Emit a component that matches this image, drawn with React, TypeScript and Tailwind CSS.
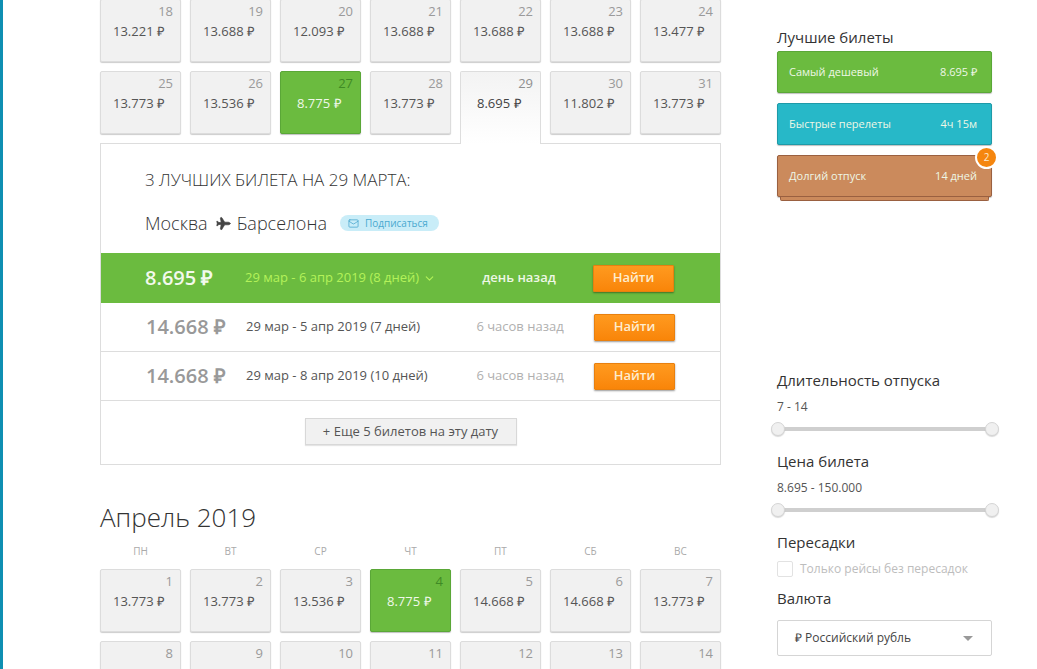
import { ChevronDown, Mail, Plane } from 'lucide-react'

type Day = { day: number; price?: string; kind?: 'cheap' | 'active' }

const marchRows: Day[][] = [
  [
    { day: 18, price: '13.221' },
    { day: 19, price: '13.688' },
    { day: 20, price: '12.093' },
    { day: 21, price: '13.688' },
    { day: 22, price: '13.688' },
    { day: 23, price: '13.688' },
    { day: 24, price: '13.477' },
  ],
  [
    { day: 25, price: '13.773' },
    { day: 26, price: '13.536' },
    { day: 27, price: '8.775', kind: 'cheap' },
    { day: 28, price: '13.773' },
    { day: 29, price: '8.695', kind: 'active' },
    { day: 30, price: '11.802' },
    { day: 31, price: '13.773' },
  ],
]

const aprilRows: Day[][] = [
  [
    { day: 1, price: '13.773' },
    { day: 2, price: '13.773' },
    { day: 3, price: '13.536' },
    { day: 4, price: '8.775', kind: 'cheap' },
    { day: 5, price: '14.668' },
    { day: 6, price: '14.668' },
    { day: 7, price: '13.773' },
  ],
  [{ day: 8 }, { day: 9 }, { day: 10 }, { day: 11 }, { day: 12 }, { day: 13 }, { day: 14 }],
]

const weekdays = ['ПН', 'ВТ', 'СР', 'ЧТ', 'ПТ', 'СБ', 'ВС']

function DayCell({ cell }: { cell: Day }) {
  if (cell.kind === 'active') {
    return (
      <div className="relative z-10 h-[73px] w-[81px] rounded-t-[2px] border border-b-0 border-[#dddddd] bg-gradient-to-b from-[#f3f3f3] to-white pr-[7px] pt-[2px]">
        <div className="text-right text-[13px] leading-[18px] text-[#8f8f8f]">{cell.day}</div>
        <div className="mt-[2px] pl-[16px] text-[13px] leading-[18px] text-[#444444]">{cell.price} ₽</div>
      </div>
    )
  }
  const cheap = cell.kind === 'cheap'
  return (
    <div
      className={
        cheap
          ? 'h-[63px] w-[81px] rounded-[2px] border border-[#5aa737] bg-[#6bbb3f] pr-[7px] pt-[2px] shadow-[0_1px_1px_rgba(0,0,0,0.25)]'
          : 'h-[63px] w-[81px] rounded-[2px] border border-[#dcdcdc] bg-[#f1f1f1] pr-[7px] pt-[2px] shadow-[0_1px_1px_rgba(0,0,0,0.2)]'
      }
    >
      <div className={cheap ? 'text-right text-[13px] leading-[18px] text-[#3f8a25]' : 'text-right text-[13px] leading-[18px] text-[#9a9a9a]'}>
        {cell.day}
      </div>
      {cell.price && (
        <div
          className={
            cheap
              ? 'mt-[2px] pl-[16px] text-[13px] leading-[18px] text-[#f0f8ea]'
              : 'mt-[2px] pl-[12px] text-[13px] leading-[18px] text-[#555555]'
          }
        >
          {cell.price} ₽
        </div>
      )}
    </div>
  )
}

function FindButton() {
  return (
    <button className="h-[27px] w-[81px] rounded-[1px] border border-[#e8800f] bg-gradient-to-b from-[#ff9a1e] to-[#f98508] text-[13px] font-semibold text-[#fdeccf] shadow-[0_1px_2px_rgba(0,0,0,0.4)]">
      Найти
    </button>
  )
}

function TicketRow({ price, dates, ago }: { price: string; dates: string; ago: string }) {
  return (
    <div className="flex h-[49px] items-center border-b border-[#dddddd] pl-[45px]">
      <div className="w-[100px] text-[20px] font-semibold text-[#999999]">{price} ₽</div>
      <div className="w-[219px] text-[13px] text-[#555555]">{dates}</div>
      <div className="w-[110px] text-center text-[13px] text-[#b0b0b0]">{ago}</div>
      <div className="ml-[19px]">
        <FindButton />
      </div>
    </div>
  )
}

function BestCard({ label, value, color, edge }: { label: string; value: string; color: string; edge: string }) {
  return (
    <div className={`flex h-[42px] items-center justify-between rounded-[2px] border px-[11px] text-[11px] text-[#eef7e6] shadow-[0_1px_1px_rgba(0,0,0,0.25)] ${color} ${edge}`}>
      <span>{label}</span>
      <span className="pr-[3px]">{value}</span>
    </div>
  )
}

function RangeSlider() {
  return (
    <div className="relative mt-[7px] h-[14px]">
      <div className="absolute left-0 right-0 top-[5px] h-[4px] bg-[#cfcfcf]" />
      <div className="absolute left-[-6px] top-0 h-[14px] w-[14px] rounded-full border border-[#d5d5d5] bg-[#f0f0f0] shadow-[0_1px_1px_rgba(0,0,0,0.15)]" />
      <div className="absolute right-[-7px] top-0 h-[14px] w-[14px] rounded-full border border-[#d5d5d5] bg-[#f0f0f0] shadow-[0_1px_1px_rgba(0,0,0,0.15)]" />
    </div>
  )
}

export default function App() {
  return (
    <div className="flex h-[669px] w-[1037px] overflow-hidden bg-white font-['Open_Sans',sans-serif] text-[#444444]">
      <div className="h-full w-[3px] shrink-0 bg-[#0e8fb2]" />

      {/* Calendar */}
      <div className="ml-[97px] w-[621px] shrink-0">
        <div className="-mt-px flex gap-[9px]">
          {marchRows[0].map((cell) => (
            <DayCell key={cell.day} cell={cell} />
          ))}
        </div>
        <div className="mt-[9px] flex items-start gap-[9px]">
          {marchRows[1].map((cell) => (
            <DayCell key={cell.day} cell={cell} />
          ))}
        </div>

        <div className="-mt-[1px] h-[322px] border border-[#dddddd] bg-white" style={{ marginTop: -1 }}>
          <div className="h-[109px] pl-[44px]">
            <div className="pt-[23px] text-[17px] font-light leading-[26px] text-[#333333]">3 ЛУЧШИХ БИЛЕТА НА 29 МАРТА:</div>
            <div className="mt-[16px] flex items-center text-[18px] font-light leading-[28px] text-[#333333]">
              <span>Москва</span>
              <Plane className="mx-[7px] h-[15px] w-[15px] rotate-45 fill-[#444444] text-[#444444]" strokeWidth={1} />
              <span>Барселона</span>
              <div className="ml-[13px] flex h-[16px] w-[99px] items-center rounded-full bg-[#c9edf8] pl-[7px] text-[10px] font-normal text-[#4aa9d0]">
                <Mail className="mr-[5px] h-[11px] w-[13px] text-[#3b9fc9]" strokeWidth={1.5} />
                Подписаться
              </div>
            </div>
          </div>

          <div className="flex h-[50px] items-center bg-[#6bbb3f] pl-[44px]">
            <div className="w-[100px] text-[20px] font-semibold text-[#f2f9ec]">8.695 ₽</div>
            <div className="flex w-[219px] items-center text-[13px] text-[#b4f25a]">
              29 мар - 6 апр 2019 (8 дней)
              <ChevronDown className="ml-[4px] h-[13px] w-[13px]" />
            </div>
            <div className="w-[110px] text-center text-[13px] font-semibold text-[#eef7e6]">день назад</div>
            <div className="ml-[19px]">
              <FindButton />
            </div>
          </div>

          <TicketRow price="14.668" dates="29 мар - 5 апр 2019 (7 дней)" ago="6 часов назад" />
          <TicketRow price="14.668" dates="29 мар - 8 апр 2019 (10 дней)" ago="6 часов назад" />

          <div className="flex justify-center pt-[17px]">
            <button className="h-[27px] w-[212px] border border-[#d8d8d8] bg-[#f1f1f1] text-[13px] text-[#555555] shadow-[0_1px_1px_rgba(0,0,0,0.1)]">
              + Еще 5 билетов на эту дату
            </button>
          </div>
        </div>

        <div className="mt-[33px] text-[26px] font-light leading-[38px] text-[#333333]">Апрель 2019</div>
        <div className="mt-[8px] flex gap-[9px]">
          {weekdays.map((name) => (
            <div key={name} className="w-[81px] text-center text-[10px] leading-[14px] text-[#aaaaaa]">
              {name}
            </div>
          ))}
        </div>
        <div className="mt-[11px] flex gap-[9px]">
          {aprilRows[0].map((cell) => (
            <DayCell key={cell.day} cell={cell} />
          ))}
        </div>
        <div className="mt-[9px] flex gap-[9px]">
          {aprilRows[1].map((cell) => (
            <DayCell key={cell.day} cell={cell} />
          ))}
        </div>
      </div>

      {/* Sidebar */}
      <div className="ml-[56px] w-[215px] shrink-0">
        <div className="mt-[27px] text-[15px] font-medium leading-[20px] text-[#333333]">Лучшие билеты</div>
        <div className="mt-[4px] flex flex-col gap-[10px]">
          <BestCard label="Самый дешевый" value="8.695 ₽" color="bg-[#6bbb3f]" edge="border-[#5aa737]" />
          <BestCard label="Быстрые перелеты" value="4ч 15м" color="bg-[#27b8c8]" edge="border-[#1e9aa8]" />
          <div className="relative">
            <BestCard label="Долгий отпуск" value="14 дней" color="bg-[#cb8a5c]" edge="border-[#9a6040]" />
            <div className="absolute left-[3px] right-[3px] top-[42px] h-[4px] rounded-b-[2px] border border-t-0 border-[#9a6040] bg-[#cb8a5c]" />
            <div className="absolute right-[-6px] top-[-9px] flex h-[23px] w-[23px] items-center justify-center rounded-full border-2 border-white bg-[#f5860f] text-[10px] text-[#fdeccf]">
              2
            </div>
          </div>
        </div>

        <div className="mt-[173px] text-[15px] font-medium leading-[20px] text-[#333333]">Длительность отпуска</div>
        <div className="mt-[9px] text-[12px] leading-[16px] text-[#555555]">7 - 14</div>
        <RangeSlider />

        <div className="mt-[15px] text-[15px] font-medium leading-[20px] text-[#333333]">Цена билета</div>
        <div className="mt-[9px] text-[12px] leading-[16px] text-[#555555]">8.695 - 150.000</div>
        <RangeSlider />

        <div className="mt-[15px] text-[15px] font-medium leading-[20px] text-[#333333]">Пересадки</div>
        <div className="mt-[9px] flex items-center">
          <div className="h-[16px] w-[16px] rounded-[2px] border border-[#e2e2e2] bg-white" />
          <span className="ml-[7px] text-[12px] leading-[16px] text-[#bdbdbd]">Только рейсы без пересадок</span>
        </div>

        <div className="mt-[11px] text-[15px] font-medium leading-[20px] text-[#333333]">Валюта</div>
        <div className="mt-[12px] flex h-[36px] items-center justify-between rounded-[2px] border border-[#d5d5d5] bg-white pl-[17px] pr-[18px] text-[12px] text-[#444444]">
          <span>₽ Российский рубль</span>
          <div className="h-0 w-0 border-x-[5px] border-t-[5px] border-x-transparent border-t-[#999999]" />
        </div>
      </div>
    </div>
  )
}
